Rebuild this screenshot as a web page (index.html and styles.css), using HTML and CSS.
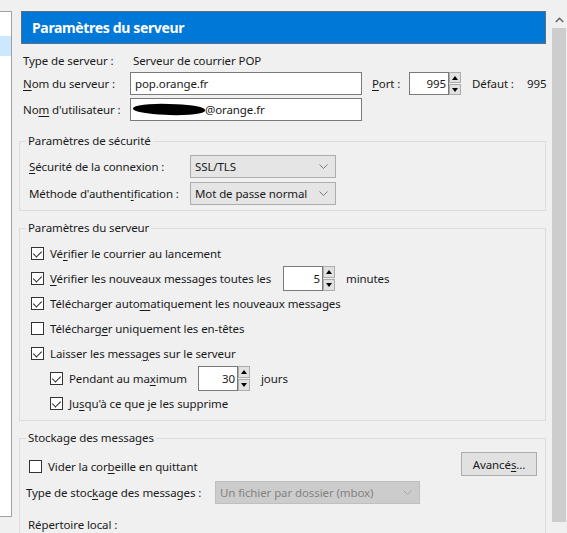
FILE: index.html
```html
<!DOCTYPE html>
<html lang="fr">
<head>
<meta charset="utf-8">
<title>Paramètres du serveur</title>
<link rel="stylesheet" href="styles.css">
</head>
<body>
<div class="window">
  <div class="sidebar"><div class="sel"></div></div>
  <div class="main">
    <div class="header">Paramètres du serveur</div>

    <div class="row r1">
      <span class="lbl">Type de serveur :</span>
      <span>Serveur de courrier POP</span>
    </div>
    <div class="row r2">
      <span class="lbl"><u>N</u>om du serveur :</span>
      <div class="input wide">pop.orange.fr</div>
      <span class="port"><u>P</u>ort :</span>
      <div class="spin port-spin"><div class="input num">995</div><div class="arrows"><span class="a up"></span><span class="a down"></span></div></div>
      <span class="def">Défaut :</span>
      <span class="defv">995</span>
    </div>
    <div class="row r3">
      <span class="lbl">No<u>m</u> d'utilisateur :</span>
      <div class="input wide"><span class="blot"></span>@orange.fr</div>
    </div>

    <fieldset class="grp g1">
      <legend>Paramètres de sécurité</legend>
      <div class="frow fr1">
        <span class="flbl"><u>S</u>écurité de la connexion :</span>
        <div class="select">SSL/TLS<svg class="chev" width="9" height="5" viewBox="0 0 9 5"><polyline points="0.5,0.5 4.5,4.5 8.5,0.5" fill="none" stroke="#7a7a7a" stroke-width="1"/></svg></div>
      </div>
      <div class="frow fr2">
        <span class="flbl">Méthode d'authent<u>i</u>fication :</span>
        <div class="select">Mot de passe normal<svg class="chev" width="9" height="5" viewBox="0 0 9 5"><polyline points="0.5,0.5 4.5,4.5 8.5,0.5" fill="none" stroke="#7a7a7a" stroke-width="1"/></svg></div>
      </div>
    </fieldset>

    <fieldset class="grp g2">
      <legend>Paramètres du serveur</legend>
      <div class="crow"><span class="cb on"></span><span>Vé<u>r</u>ifier le courrier au lancement</span></div>
      <div class="crow"><span class="cb on"></span><span class="clbl1"><u>V</u>érifier les nouveaux messages toutes les</span>
        <div class="spin"><div class="input num">5</div><div class="arrows"><span class="a up"></span><span class="a down"></span></div></div>
        <span class="unit">minutes</span></div>
      <div class="crow"><span class="cb on"></span><span>Télécharger auto<u>m</u>atiquement les nouveaux messages</span></div>
      <div class="crow"><span class="cb"></span><span>Télécharg<u>e</u>r uniquement les en-têtes</span></div>
      <div class="crow"><span class="cb on"></span><span>Laisser les messa<u>g</u>es sur le serveur</span></div>
      <div class="crow sub"><span class="cb on"></span><span class="clbl2">Pendant au ma<u>x</u>imum</span>
        <div class="spin"><div class="input num">30</div><div class="arrows"><span class="a up"></span><span class="a down"></span></div></div>
        <span class="unit">jours</span></div>
      <div class="crow sub"><span class="cb on"></span><span>Ju<u>s</u>qu'à ce que je les supprime</span></div>
    </fieldset>

    <fieldset class="grp g3">
      <legend>Stockage des messages</legend>
      <div class="srow1">
        <span class="cb"></span><span class="vider">Vider la cor<u>b</u>eille en quittant</span>
        <div class="btn">Avancé<u>s</u>...</div>
      </div>
      <div class="srow2">
        <span class="slbl">Type de stoc<u>k</u>age des messages :</span>
        <div class="select dis">Un fichier par dossier (mbox)<svg class="chev" width="9" height="5" viewBox="0 0 9 5"><polyline points="0.5,0.5 4.5,4.5 8.5,0.5" fill="none" stroke="#a8a8a8" stroke-width="1"/></svg></div>
      </div>
      <div class="srow3">Répertoire local :</div>
    </fieldset>
  </div>
  <div class="scrollbar">
    <div class="sb-up"><svg width="9" height="6" viewBox="0 0 9 6"><polyline points="0.8,5 4.5,1.3 8.2,5" fill="none" stroke="#606060" stroke-width="1.4"/></svg></div>
    <div class="thumb"></div>
  </div>
</div>
</body>
</html>
```

FILE: styles.css
```css
* { box-sizing: border-box; }
html, body {
  margin: 0;
  padding: 0;
  background: #f0f0f0;
  overflow: hidden;
}
body {
  font-family: "Noto Sans", "Open Sans", sans-serif;
  font-size: 11.5px;
  letter-spacing: -0.1px;
  color: #1a1a1a;
  width: 567px;
  height: 533px;
}
u { text-decoration: underline; text-underline-offset: 2px; }

.window {
  display: flex;
  height: 533px;
  align-items: flex-start;
}

.sidebar {
  flex: none;
  width: 12px;
  margin-top: 11px;
  height: 506px;
  background: #fff;
  border-top: 1px solid #a0a0a0;
  border-right: 1px solid #a0a0a0;
  border-bottom: 1px solid #a0a0a0;
}
.sidebar .sel {
  margin-top: 24px;
  height: 20px;
  background: #cce8ff;
}

.main {
  flex: none;
  width: 528px;
  margin-left: 7px;
  display: flex;
  flex-direction: column;
}
.main > * { flex-shrink: 0; }

.header {
  margin: 11px 1px 0 2px;
  height: 33px;
  background: #0078d7;
  border: 1px solid #5f6f7c;
  color: #fff;
  font-weight: bold;
  font-size: 14px;
  letter-spacing: -0.35px;
  padding-left: 10px;
  line-height: 31px;
}

.row {
  display: flex;
  align-items: center;
  padding-left: 4px;
}
.r1 { margin-top: 5px; height: 22px; }
.r2 { margin-top: 1px; height: 23px; }
.r3 { margin-top: 3px; height: 23px; }
.lbl { width: 107px; flex: none; }
.r1 .lbl { width: 110px; }

.input {
  background: #fff;
  border: 1px solid #7a7a7a;
  height: 23px;
  line-height: 21px;
  padding: 0 4px;
  display: flex;
  align-items: center;
}
.wide { width: 232px; }
.port { margin-left: 10px; width: 37px; }
.def { margin-left: 11px; width: 55px; }

.blot {
  display: inline-block;
  width: 72px;
  height: 11px;
  background: #000;
  border-radius: 50% 40% 50% 45%;
  margin-left: -2px;
  transform: rotate(2deg);
}

.spin { display: flex; height: 25px; align-items: stretch; }
.port-spin { height: 23px; }
.spin .num {
  width: 40px;
  height: 100%;
  justify-content: flex-end;
  padding: 0 2px 0 0;
}
.arrows {
  width: 12px;
  display: flex;
  flex-direction: column;
  gap: 1px;
}
.a {
  flex: 1;
  background: #e1e1e1;
  border: 1px solid #adadad;
  display: flex;
  align-items: center;
  justify-content: center;
}
.a::after {
  content: "";
  width: 0;
  height: 0;
  border-left: 3px solid transparent;
  border-right: 3px solid transparent;
}
.up::after { border-bottom: 4px solid #000; }
.down::after { border-top: 4px solid #000; }

.grp {
  margin: 0 1px 0 0;
  border: 1px solid #dcdcdc;
  padding: 0 8px 0 6px;
  min-width: 0;
}
.grp legend {
  padding: 0 2px;
  line-height: 16px;
  height: 16px;
}
.g1 { margin-top: 12px; padding-bottom: 5px; }
.g2 { margin-top: 9px; padding-bottom: 4px; }
.g3 { margin-top: 9px; height: 120px; }

.frow {
  display: flex;
  align-items: center;
  padding-left: 3px;
  height: 23px;
}
.fr1 { margin-top: 6px; }
.fr2 { margin-top: 4px; }
.flbl { width: 161px; flex: none; }

.select {
  width: 146px;
  height: 23px;
  background: #e5e5e5;
  border: 1px solid #adadad;
  display: flex;
  align-items: center;
  justify-content: space-between;
  padding: 0 7px 0 4px;
}
.select.dis {
  width: 205px;
  background: #cccccc;
  border-color: #bfbfbf;
  color: #838383;
}

.crow {
  display: flex;
  align-items: center;
  height: 25px;
  padding-left: 5px;
}
.g2 legend + .crow { margin-top: 5px; }
.crow.sub { padding-left: 24px; }

.cb {
  flex: none;
  width: 13px;
  height: 13px;
  border: 1px solid #333;
  background: #fff;
  margin-right: 6px;
  position: relative;
}
.cb.on::after {
  content: "";
  position: absolute;
  left: 3px;
  top: 1px;
  width: 4px;
  height: 7px;
  border-right: 1px solid #222;
  border-bottom: 1px solid #222;
  transform: rotate(45deg);
}

.clbl1 { width: 233px; flex: none; white-space: nowrap; }
.clbl2 { width: 129px; flex: none; white-space: nowrap; }
.unit { margin-left: 11px; }

.srow1 {
  margin-top: 6px;
  height: 24px;
  display: flex;
  align-items: center;
  padding-left: 3px;
}
.srow1 .cb { margin-top: 4px; }
.vider { margin-top: 4px; flex: 1; }
.btn {
  width: 76px;
  height: 24px;
  background: #e1e1e1;
  border: 1px solid #adadad;
  display: flex;
  align-items: center;
  justify-content: center;
}
.srow2 {
  margin-top: 5px;
  height: 23px;
  display: flex;
  align-items: center;
}
.slbl { width: 189px; flex: none; }
.srow3 {
  margin-top: 11px;
  height: 20px;
  line-height: 20px;
  padding-left: 2px;
}

.scrollbar {
  flex: none;
  margin-left: 4px;
  width: 16px;
  display: flex;
  flex-direction: column;
  margin-top: 11px;
}
.sb-up {
  height: 17px;
  display: flex;
  align-items: center;
  justify-content: center;
}
.thumb {
  height: 494px;
  margin: 0 1px;
  background: #cdcdcd;
}
```
